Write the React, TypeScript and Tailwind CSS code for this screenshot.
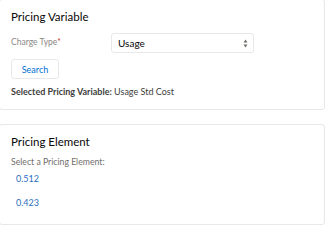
export default function App() {
  return (
    <div className="w-[330px] h-[232px] bg-white overflow-hidden font-['Lato',_'Open_Sans',_sans-serif] text-[#080707]">
      {/* Pricing Variable */}
      <div className="ml-[-1px] mt-[-1px] w-[326px] h-[111px] border border-[#e8e8e8] rounded-[3px] bg-white pl-[11px] pt-[8px]">
        <h2 className="text-[11.5px] leading-[18px]">Pricing Variable</h2>
        <div className="mt-[7px] flex items-start">
          <label className="w-[100px] pt-[3px] text-[8.5px] leading-[12px] text-[#8a8886]">
            Charge Type<span className="text-[#c23934]">*</span>
          </label>
          <div className="relative w-[143px] h-[20px] border border-[#e8e8e8] rounded-[3px] flex items-center pl-[6px]">
            <span className="text-[10px] leading-none">Usage</span>
            <svg className="absolute right-[5px] top-[5px]" width="5" height="9" viewBox="0 0 5 9">
              <path d="M0.5 3.5 L2.5 0.5 L4.5 3.5 Z" fill="#706e6b" />
              <path d="M0.5 5.5 L2.5 8.5 L4.5 5.5 Z" fill="#706e6b" />
            </svg>
          </div>
        </div>
        <button className="mt-[6px] w-[48px] h-[20px] border border-[#e8e8e8] rounded-[3px] text-[9px] leading-none text-[#0070d2] bg-white">
          Search
        </button>
        <p className="mt-[6px] text-[9px] leading-[14px] text-[#3e3e3c]">
          <span className="font-bold">Selected Pricing Variable:</span> Usage Std Cost
        </p>
      </div>

      {/* Pricing Element */}
      <div className="ml-[-1px] mt-[14px] w-[326px] h-[101px] border border-[#e8e8e8] rounded-[3px] bg-white pl-[11px] pt-[8px]">
        <h2 className="text-[11.5px] leading-[18px]">Pricing Element</h2>
        <p className="mt-[4px] text-[8.7px] leading-[14px] text-[#706e6b]">Select a Pricing Element:</p>
        <div className="pl-[5px] flex flex-col gap-[10px] mt-[3px]">
          <span className="text-[9px] leading-[14px] text-[#2a6fc0]">0.512</span>
          <span className="text-[9px] leading-[14px] text-[#2a6fc0]">0.423</span>
        </div>
      </div>
    </div>
  );
}
